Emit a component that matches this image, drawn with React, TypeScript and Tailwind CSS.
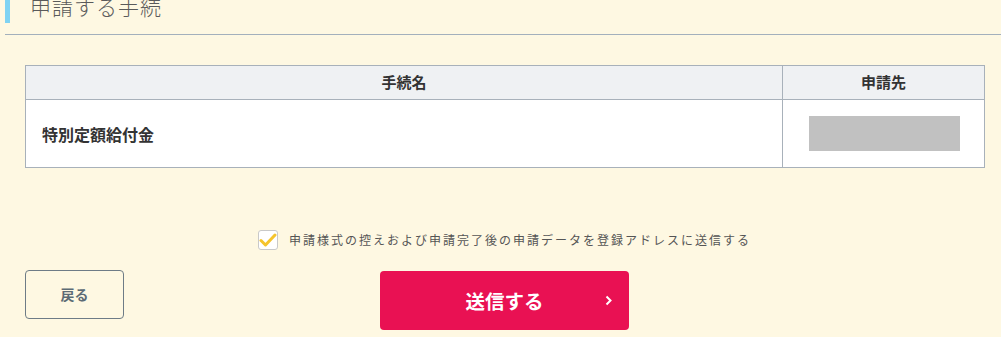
import React, { useState } from 'react';

const font = { fontFamily: '"Noto Sans CJK JP", "Noto Sans", sans-serif' };

const App: React.FC = () => {
  const [checked, setChecked] = useState(true);

  return (
    <div className="w-[1001px] h-[337px] overflow-hidden bg-[#fef8e2] text-[#333]" style={font}>
      {/* section heading, scrolled so its top is cut */}
      <div className="h-[34px] pl-[5px]">
        <div className="flex items-start h-[23px] border-l-[5px] border-[#7fd3f3] pl-[20px]">
          <h2 className="-mt-[4px] text-[21px] font-light text-[#5a5a5a] tracking-[1px] leading-[21px] whitespace-nowrap">
            申請する手続
          </h2>
        </div>
      </div>
      <div className="ml-[5px] h-px bg-[#a3b0bc]" />

      {/* procedures table */}
      <div className="px-[25px] pt-[30px]">
        <table className="w-[960px] border-collapse border border-[#a8b1ba] bg-white">
          <thead>
            <tr className="bg-[#eff1f3] h-[34px]">
              <th className="border border-[#a8b1ba] text-[15px] font-bold text-[#333] text-center">手続名</th>
              <th className="border border-[#a8b1ba] text-[15px] font-bold text-[#333] text-center w-[202px]">申請先</th>
            </tr>
          </thead>
          <tbody>
            <tr className="h-[68px]">
              <td className="border border-[#a8b1ba] pl-[16px] text-[16px] font-bold text-[#333]">特別定額給付金</td>
              <td className="border border-[#a8b1ba] pl-[26px]">
                <div className="w-[151px] h-[35px] bg-[#c1c1c1]" />
              </td>
            </tr>
          </tbody>
        </table>
      </div>

      {/* mail copy checkbox */}
      <label className="flex items-center justify-center gap-[11px] mt-[62px] pl-[8px] h-[20px] cursor-pointer select-none">
        <span
          onClick={() => setChecked(!checked)}
          className="flex items-center justify-center w-[20px] h-[20px] rounded-[3px] border border-[#c9c9c9] bg-white"
        >
          {checked && (
            <svg width="18" height="14" viewBox="0 0 18 14" fill="none">
              <path d="M2 7.5 L6.5 12 L16 2" stroke="#f5c42c" strokeWidth="3" strokeLinecap="round" strokeLinejoin="round" />
            </svg>
          )}
        </span>
        <span className="text-[12px] text-[#555] tracking-[2px]">
          申請様式の控えおよび申請完了後の申請データを登録アドレスに送信する
        </span>
      </label>

      {/* action buttons */}
      <div className="flex items-start px-[25px] mt-[20px]">
        <button className="w-[99px] h-[49px] rounded-[4px] border border-[#6e7c86] text-[14px] font-bold text-[#5c6b75]">
          戻る
        </button>
        <button className="relative ml-[256px] mt-[1px] w-[249px] h-[59px] rounded-[4px] bg-[#e91153] text-white text-[19.5px] font-bold">
          送信する
          <svg className="absolute right-[17px] top-[24px]" width="7" height="11" viewBox="0 0 7 11" fill="none">
            <path d="M1.5 1.5 L5.5 5.5 L1.5 9.5" stroke="white" strokeWidth="2" />
          </svg>
        </button>
      </div>
    </div>
  );
};

export default App;
